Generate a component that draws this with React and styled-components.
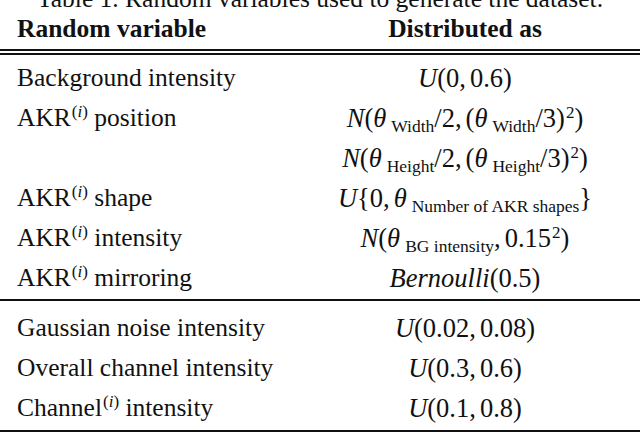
import React from 'react';
import styled, { createGlobalStyle } from 'styled-components';

const GlobalStyle = createGlobalStyle`
  html, body {
    margin: 0;
    padding: 0;
    background: #ffffff;
  }
  body {
    width: 640px;
    height: 433px;
    overflow: hidden;
    font-family: "Liberation Serif", "Times New Roman", serif;
    color: #111111;
  }
`;

const Page = styled.div`
  width: 640px;
  display: flex;
  flex-direction: column;
`;

// the caption sits above the crop; only its lower half shows
const Caption = styled.div`
  margin-top: -16px;
  height: 30px;
  line-height: 30px;
  font-size: 25.5px;
  text-align: center;
  white-space: nowrap;
`;

const Row = styled.div`
  display: grid;
  grid-template-columns: 290px 1fr;
  height: ${props => props.$height || 40}px;
  line-height: ${props => props.$height || 40}px;
  font-size: 25.5px;
  font-weight: ${props => (props.$head ? 700 : 400)};
`;

const Label = styled.div`
  padding-left: 17px;
  white-space: nowrap;
`;

const Value = styled.div`
  text-align: center;
  white-space: nowrap;
  font-size: ${props => (props.$head ? 25.5 : 26.5)}px;
`;

const DoubleRule = styled.div`
  height: 2px;
  border-top: 2px solid #111111;
  border-bottom: 2px solid #111111;
  margin-top: 5px;
`;

const Rule = styled.div`
  height: 2px;
  background: #111111;
  margin-top: ${props => props.$above || 0}px;
`;

const Section = styled.div`
  display: flex;
  flex-direction: column;
  padding-top: ${props => props.$top || 0}px;
`;

const V = styled.i`
  font-style: italic;
`;

const Sup = styled.sup`
  font-size: 17px;
  line-height: 0;
  vertical-align: 9px;
  margin-left: 1px;
`;

const Sub = styled.sub`
  font-size: 17.5px;
  line-height: 0;
  vertical-align: -5px;
  margin-left: 5px;
`;

const Comma = styled.span`
  margin-right: 4px;
`;

const Akr = ({ children }) => (
  <>
    AKR<Sup>(<V>i</V>)</Sup> {children}
  </>
);

const rowsTop = [
  { label: 'Background intensity', value: <><V>U</V>(0<Comma>,</Comma>0.6)</> },
  {
    label: <Akr>position</Akr>,
    value: <><V>N</V>(<V>θ</V><Sub>Width</Sub>/2<Comma>,</Comma>(<V>θ</V><Sub>Width</Sub>/3)<Sup>2</Sup>)</>,
  },
  {
    label: '',
    value: <><V>N</V>(<V>θ</V><Sub>Height</Sub>/2<Comma>,</Comma>(<V>θ</V><Sub>Height</Sub>/3)<Sup>2</Sup>)</>,
  },
  {
    label: <Akr>shape</Akr>,
    value: <><V>U</V>{'{'}0<Comma>,</Comma><V>θ</V><Sub>Number of AKR shapes</Sub>{'}'}</>,
  },
  {
    label: <Akr>intensity</Akr>,
    value: <><V>N</V>(<V>θ</V><Sub>BG intensity</Sub><Comma>,</Comma>0.15<Sup>2</Sup>)</>,
  },
  { label: <Akr>mirroring</Akr>, value: <><V>Bernoulli</V>(0.5)</> },
];

const rowsBottom = [
  { label: 'Gaussian noise intensity', value: <><V>U</V>(0.02<Comma>,</Comma>0.08)</> },
  { label: 'Overall channel intensity', value: <><V>U</V>(0.3<Comma>,</Comma>0.6)</> },
  {
    label: <>Channel<Sup>(<V>i</V>)</Sup> intensity</>,
    value: <><V>U</V>(0.1<Comma>,</Comma>0.8)</>,
  },
];

export default function App() {
  return (
    <Page>
      <GlobalStyle />
      <Caption>Table 1. Random variables used to generate the dataset.</Caption>
      <Row $head $height={30}>
        <Label>Random variable</Label>
        <Value $head>Distributed as</Value>
      </Row>
      <DoubleRule />
      <Section $top={3}>
        {rowsTop.map((r, i) => (
          <Row key={i}>
            <Label>{r.label}</Label>
            <Value>{r.value}</Value>
          </Row>
        ))}
      </Section>
      <Rule $above={1} />
      <Section $top={7}>
        {rowsBottom.map((r, i) => (
          <Row key={i}>
            <Label>{r.label}</Label>
            <Value>{r.value}</Value>
          </Row>
        ))}
      </Section>
      <Rule $above={2} />
    </Page>
  );
}
